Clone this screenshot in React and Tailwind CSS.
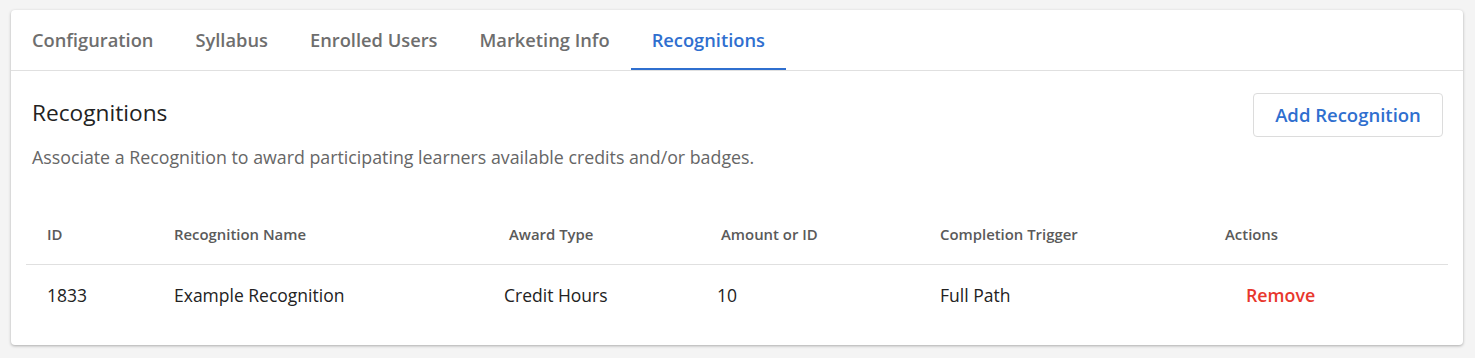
export default function App() {
  const tabs = ["Configuration", "Syllabus", "Enrolled Users", "Marketing Info", "Recognitions"];
  const cols = "grid grid-cols-[148px_330px_213px_223px_285px_1fr]";
  return (
    <div className="min-h-[358px] w-full bg-[#f4f4f4] pt-[10px] pl-[11px] pr-[12px]" style={{ fontFamily: '"Open Sans", sans-serif' }}>
      <div className="h-[335px] rounded-[4px] bg-white shadow-[0_1px_3px_rgba(0,0,0,0.3)]">
        <div className="flex h-[61px] border-b border-[#e0e0e0]">
          {tabs.map((t, i) => (
            <div
              key={t}
              className={
                "flex items-center px-[21px] text-[18.3px] font-semibold " +
                (i === 4 ? "text-[#2f6fcf] border-b-2 border-[#2f6fcf] pt-[2px]" : "text-[#6e6e6e]")
              }
            >
              {t}
            </div>
          ))}
        </div>
        <div className="flex justify-between pl-[21px] pr-[20px] pt-[22px]">
          <div className="pt-[5px]">
            <div className="text-[22.7px] leading-[30px] text-[#222]">Recognitions</div>
            <div className="mt-[16px] text-[17.8px] leading-[26px] text-[#666]">
              Associate a Recognition to award participating learners available credits and/or badges.
            </div>
          </div>
          <button className="h-[44px] w-[190px] rounded-[4px] border border-[#dcdcdc] text-[18.5px] font-semibold text-[#2f6fcf]">
            Add Recognition
          </button>
        </div>
        <div className="mx-[15px] mt-[42px]">
          <div className={cols + " h-[53px] items-start pt-[12px] border-b border-[#e0e0e0] text-[14.9px] leading-[20px] font-semibold text-[#5a5a5a]"}>
            <div className="pl-[21px]">ID</div>
            <div>Recognition Name</div>
            <div className="pl-[5px]">Award Type</div>
            <div className="pl-[4px]">Amount or ID</div>
            <div>Completion Trigger</div>
            <div>Actions</div>
          </div>
          <div className={cols + " h-[60px] items-center text-[17.5px] text-[#222]"}>
            <div className="pl-[21px]">1833</div>
            <div>Example Recognition</div>
            <div>Credit Hours</div>
            <div>10</div>
            <div>Full Path</div>
            <div className="pl-[21px] text-[17.8px] font-semibold text-[#e8372d]">Remove</div>
          </div>
        </div>
      </div>
    </div>
  );
}
